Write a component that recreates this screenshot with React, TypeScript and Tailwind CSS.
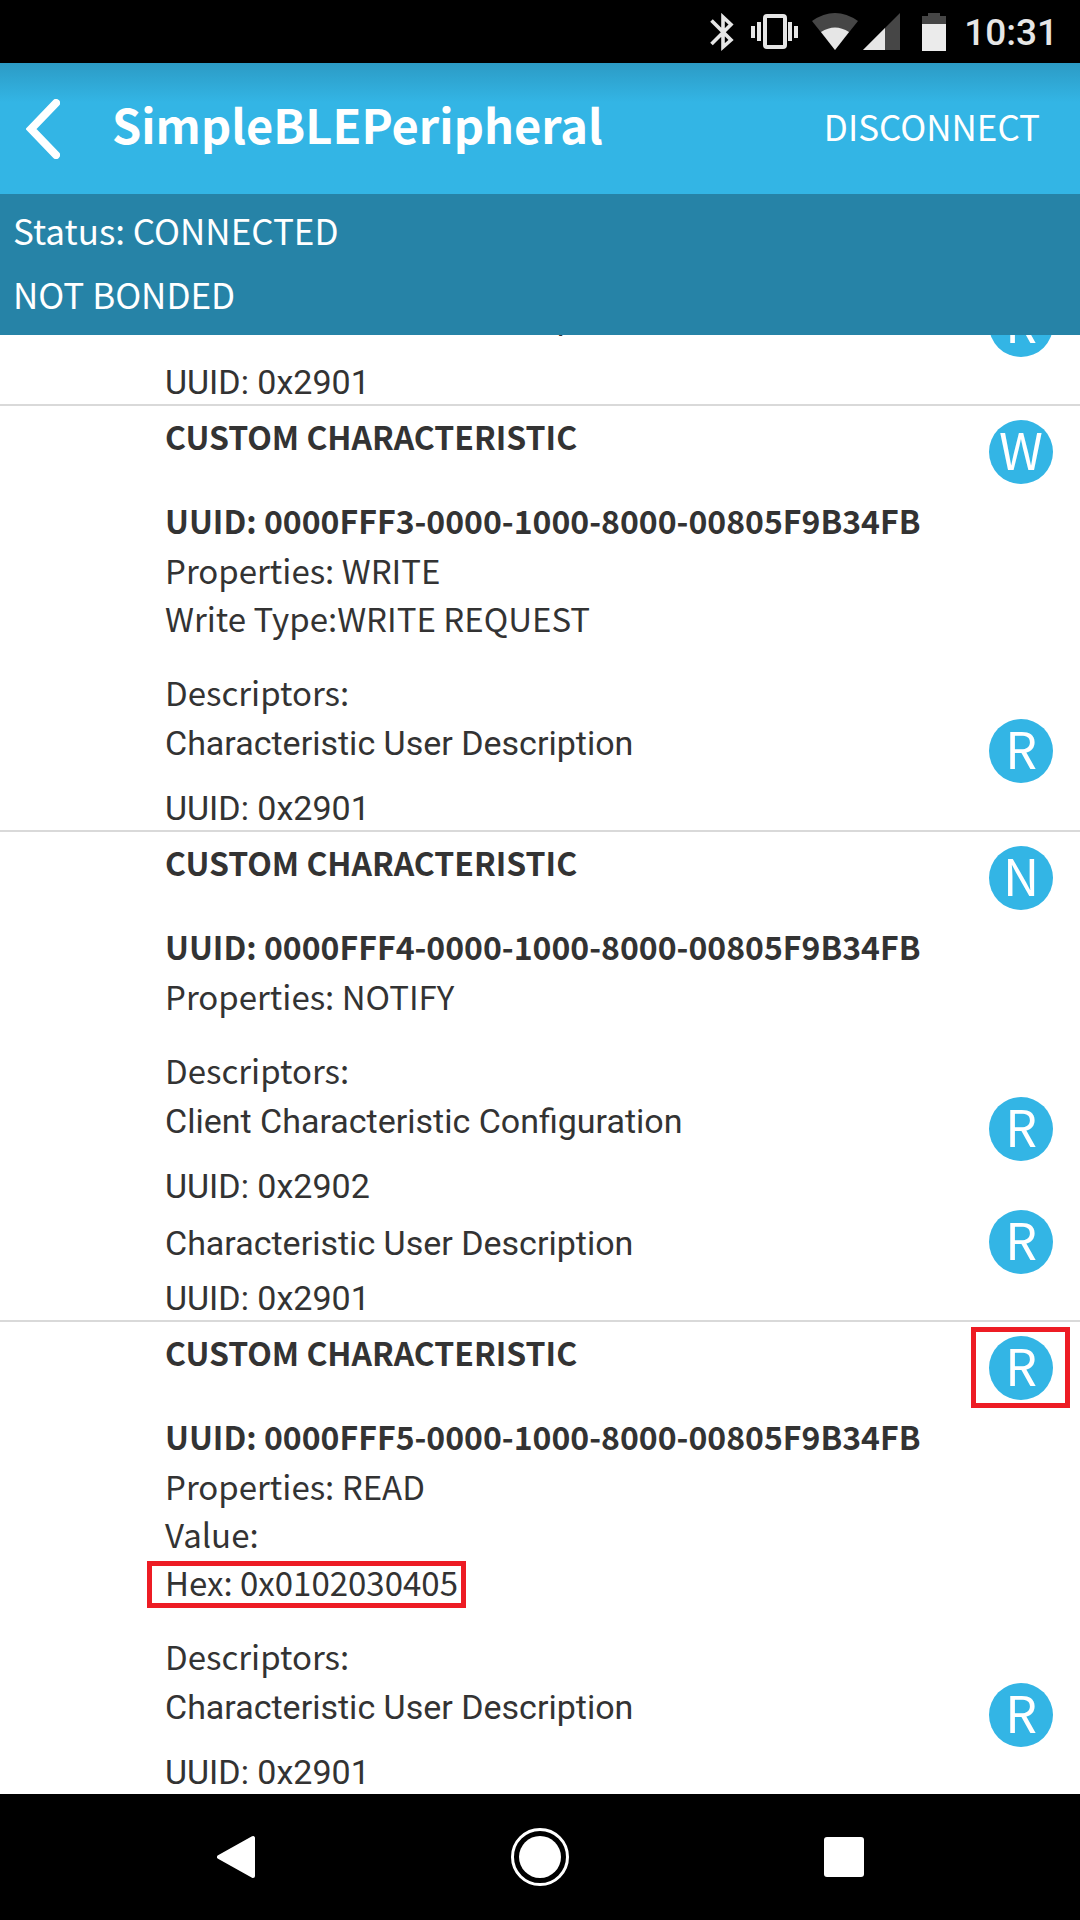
import React from "react";

type Descriptor = { name: string; uuid: string; compact?: boolean };
type Characteristic = {
  uuid: string;
  action: string;
  lines: string[];
  hex?: string;
  highlighted?: boolean;
  descriptors: Descriptor[];
};

const userDescription: Descriptor = { name: "Characteristic User Description", uuid: "0x2901" };

const characteristics: Characteristic[] = [
  {
    uuid: "0000FFF3-0000-1000-8000-00805F9B34FB",
    action: "W",
    lines: ["Properties: WRITE", "Write Type:WRITE REQUEST"],
    descriptors: [userDescription],
  },
  {
    uuid: "0000FFF4-0000-1000-8000-00805F9B34FB",
    action: "N",
    lines: ["Properties: NOTIFY"],
    descriptors: [
      { name: "Client Characteristic Configuration", uuid: "0x2902" },
      { ...userDescription, compact: true },
    ],
  },
  {
    uuid: "0000FFF5-0000-1000-8000-00805F9B34FB",
    action: "R",
    lines: ["Properties: READ", "Value:"],
    hex: "Hex: 0x0102030405",
    highlighted: true,
    descriptors: [userDescription],
  },
];

const actionNames: Record<string, string> = { R: "Read", W: "Write", N: "Notify" };

function ActionButton({ letter }: { letter: string }) {
  return (
    <button
      type="button"
      aria-label={actionNames[letter]}
      className="flex size-16 shrink-0 items-center justify-center rounded-full bg-[#33b5e5] pb-2 text-[50px] leading-[56px] text-white"
    >
      {letter}
    </button>
  );
}

function StatusBar() {
  return (
    <div className="flex h-[63px] shrink-0 items-center justify-end bg-black pr-[22px] text-[#e6e6e6]">
      <svg className="mr-4 h-[38px] w-6" viewBox="0 0 24 38" fill="none" stroke="currentColor" strokeWidth="3.6" aria-label="Bluetooth">
        <path d="M1.5 7.5 L21 27 L13 34 V4 L21 11.5 L1.5 31" strokeMiterlimit="8" />
      </svg>
      <svg className="mr-[14px] h-[38px] w-12" viewBox="0 0 48 38" fill="currentColor" aria-label="Vibrate">
        <rect x="1" y="13" width="4" height="12" />
        <rect x="7" y="9" width="4" height="19" />
        <rect x="15" y="3" width="20" height="31" rx="2" fill="none" stroke="currentColor" strokeWidth="4" />
        <rect x="38" y="9" width="4" height="19" />
        <rect x="44" y="13" width="4" height="12" />
      </svg>
      <svg className="mr-[5px] h-[38px] w-[46px]" viewBox="0 0 46 38" aria-label="Wi-Fi">
        <path d="M0 8 Q23 -8 46 8 L23 37 Z" fill="#464646" />
        <path d="M9 19 Q23 10 37 19 L23 37 Z" fill="#e6e6e6" />
      </svg>
      <svg className="mr-[22px] h-[38px] w-[37px]" viewBox="0 0 37 38" aria-label="Signal">
        <path d="M37 0 V37 H0 Z" fill="#464646" />
        <path d="M22 15 V37 H0 Z" fill="#e6e6e6" />
      </svg>
      <svg className="mr-[18px] h-[38px] w-6" viewBox="0 0 24 38" aria-label="Battery">
        <path d="M6 0 H18 V3 H24 V12 H0 V3 H6 Z" fill="#464646" />
        <rect x="0" y="11" width="24" height="27" fill="#ebebeb" />
      </svg>
      <span className="pt-[2px] font-['Roboto',sans-serif] text-[37px] leading-[44px] font-medium">10:31</span>
    </div>
  );
}

function DescriptorRow({ name, uuid, compact }: Descriptor) {
  return (
    <div className={compact ? "mt-1 flex items-start justify-between" : "mt-[3px] flex items-start justify-between"}>
      <div
        className={
          compact
            ? "flex flex-col gap-[15px] pt-[13px] font-['Roboto',sans-serif] text-[34px] leading-[40px]"
            : "flex flex-col gap-[25px] pt-1 font-['Roboto',sans-serif] text-[34px] leading-[40px]"
        }
      >
        <p>{name}</p>
        <p>UUID: {uuid}</p>
      </div>
      <ActionButton letter="R" />
    </div>
  );
}

function CharacteristicItem({ item }: { item: Characteristic }) {
  return (
    <li className="border-t-2 border-[#d9d9d9] pr-[27px] pb-[2px] pl-[165px]">
      <div className="flex items-start justify-between">
        <div className="pt-[6px]">
          <h2 className="text-[32px] font-bold">CUSTOM CHARACTERISTIC</h2>
          <p className="mt-9 mb-[2px] text-[32px] font-bold">UUID: {item.uuid}</p>
          {item.lines.map((line) => (
            <p key={line}>{line}</p>
          ))}
          {item.hex && (
            <p className="relative w-fit">
              {item.hex}
              <span className="absolute top-[3px] -right-2 -bottom-[2px] -left-[18px] border-5 border-[#ed1c24]" />
            </p>
          )}
        </div>
        <div className="relative mt-[14px]">
          <ActionButton letter={item.action} />
          {item.highlighted && (
            <span className="absolute -top-[9px] -right-[17px] -bottom-2 -left-[18px] border-5 border-[#ed1c24]" />
          )}
        </div>
      </div>
      <h3 className="mt-[26px]">Descriptors:</h3>
      {item.descriptors.map((d) => (
        <DescriptorRow key={d.uuid} {...d} />
      ))}
    </li>
  );
}

export default function App() {
  return (
    <div className="flex h-screen flex-col overflow-hidden bg-white font-['Noto_Sans_CJK_SC',sans-serif] text-[33px] leading-[48px] text-[#333333]">
      <StatusBar />
      <header className="flex h-[131px] shrink-0 items-center bg-[#33b5e5] bg-linear-to-b from-[#2c9bc5] to-[#33b5e5] to-30% pr-10 pl-[26px] text-white">
        <button type="button" aria-label="Back" className="mr-[52px]">
          <svg className="h-[60px] w-[34px]" viewBox="0 0 34 60" fill="none" stroke="currentColor" strokeWidth="8">
            <path d="M30 4 L5 30 L30 56" strokeLinecap="round" />
          </svg>
        </button>
        <h1 className="flex-1 pb-[9px] text-[47px] leading-[60px] font-bold">SimpleBLEPeripheral</h1>
        <button type="button" className="pb-[6px] text-[35px]">DISCONNECT</button>
      </header>
      <section className="h-[141px] shrink-0 bg-[#2683a7] px-[13px] pt-1 text-[35px] leading-[64px] text-white">
        <p>Status: CONNECTED</p>
        <p>NOT BONDED</p>
      </section>
      <main className="flex min-h-0 flex-1 flex-col justify-end overflow-hidden">
        <ul>
          <li className="pr-[27px] pb-[2px] pl-[165px]">
            <DescriptorRow {...userDescription} />
          </li>
          {characteristics.map((item) => (
            <CharacteristicItem key={item.uuid} item={item} />
          ))}
        </ul>
      </main>
      <nav className="grid h-[126px] shrink-0 grid-cols-3 items-center justify-items-center bg-black px-[84px] text-white">
        <button type="button" aria-label="Back">
          <svg className="h-[44px] w-[38px]" viewBox="0 0 38 44" fill="currentColor" stroke="currentColor" strokeWidth="4" strokeLinejoin="round">
            <path d="M36 3 V41 L2 22 Z" />
          </svg>
        </button>
        <button type="button" aria-label="Home">
          <svg className="size-[58px]" viewBox="0 0 58 58" fill="currentColor">
            <circle cx="29" cy="29" r="27.5" fill="none" stroke="currentColor" strokeWidth="3" />
            <circle cx="29" cy="29" r="21" />
          </svg>
        </button>
        <button type="button" aria-label="Recent apps">
          <svg className="size-10" viewBox="0 0 40 40" fill="currentColor">
            <rect width="40" height="40" rx="3" />
          </svg>
        </button>
      </nav>
    </div>
  );
}
